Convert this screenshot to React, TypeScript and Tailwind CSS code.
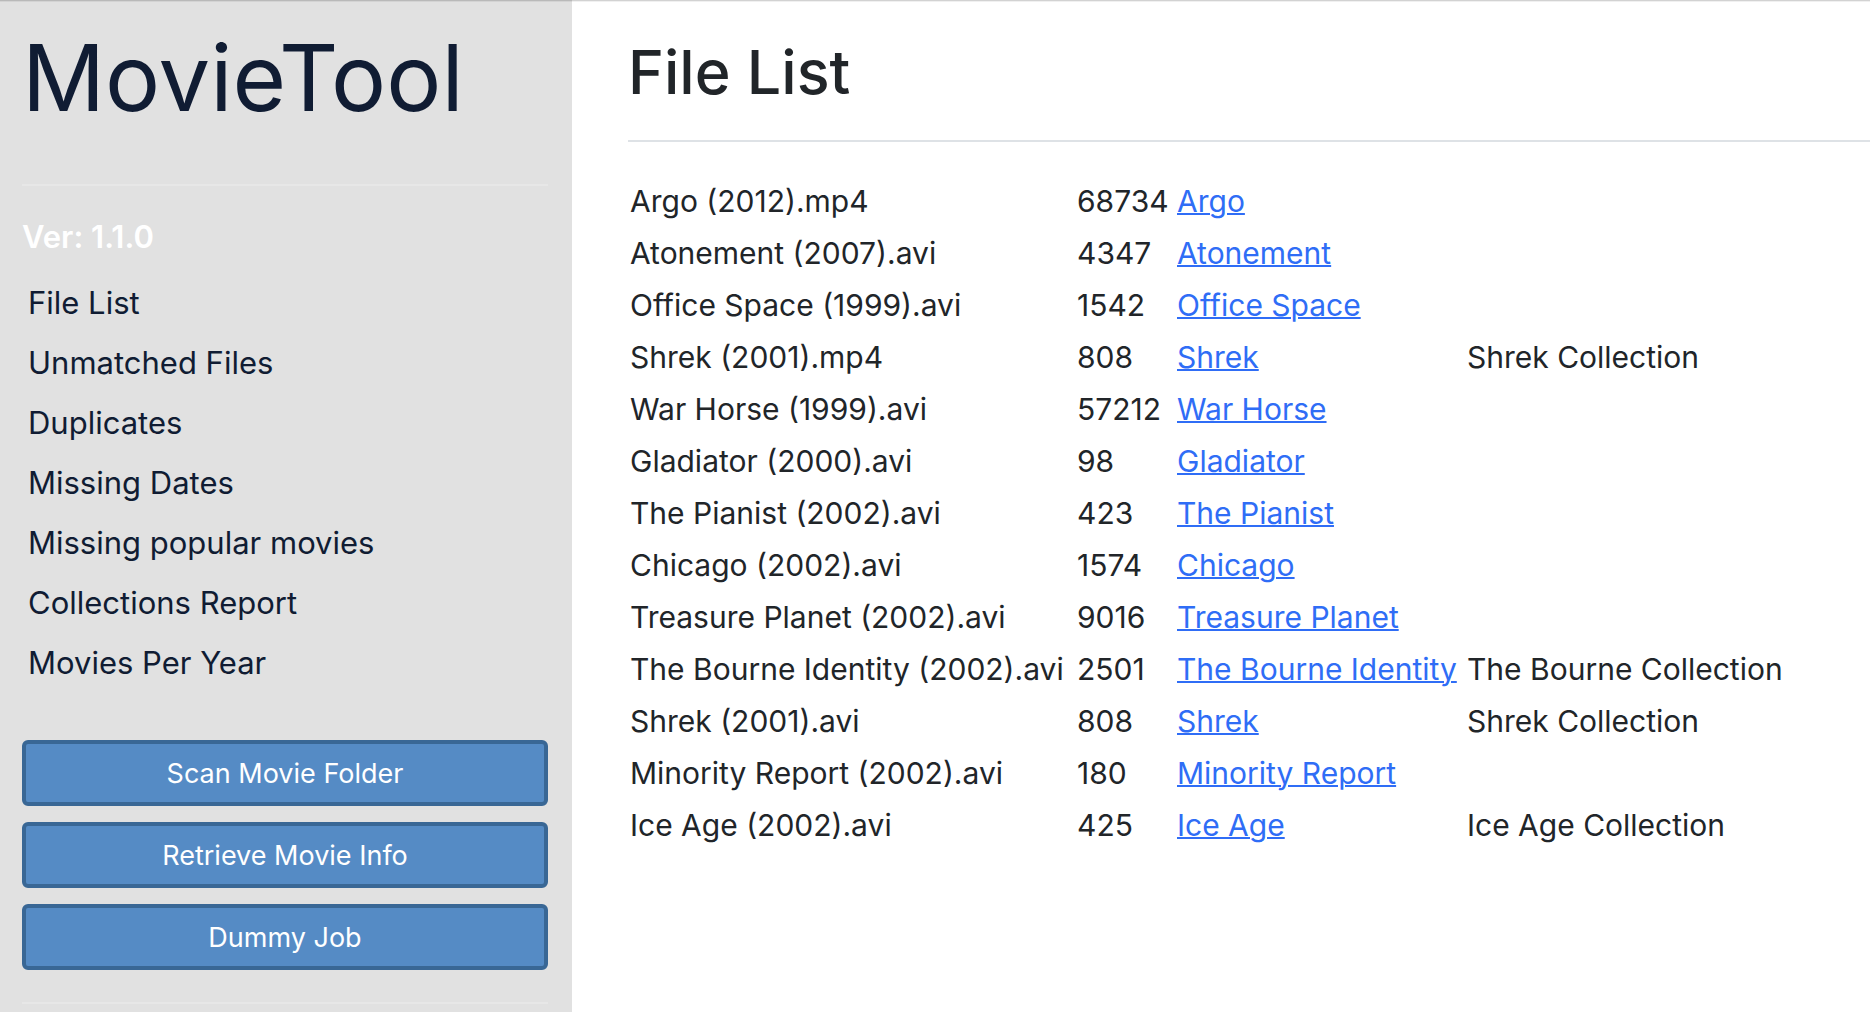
const navItems = [
  'File List',
  'Unmatched Files',
  'Duplicates',
  'Missing Dates',
  'Missing popular movies',
  'Collections Report',
  'Movies Per Year',
];

const jobs = ['Scan Movie Folder', 'Retrieve Movie Info', 'Dummy Job'];

type Movie = { file: string; id: number; title: string; collection?: string };

const movies: Movie[] = [
  { file: 'Argo (2012).mp4', id: 68734, title: 'Argo' },
  { file: 'Atonement (2007).avi', id: 4347, title: 'Atonement' },
  { file: 'Office Space (1999).avi', id: 1542, title: 'Office Space' },
  { file: 'Shrek (2001).mp4', id: 808, title: 'Shrek', collection: 'Shrek Collection' },
  { file: 'War Horse (1999).avi', id: 57212, title: 'War Horse' },
  { file: 'Gladiator (2000).avi', id: 98, title: 'Gladiator' },
  { file: 'The Pianist (2002).avi', id: 423, title: 'The Pianist' },
  { file: 'Chicago (2002).avi', id: 1574, title: 'Chicago' },
  { file: 'Treasure Planet (2002).avi', id: 9016, title: 'Treasure Planet' },
  { file: 'The Bourne Identity (2002).avi', id: 2501, title: 'The Bourne Identity', collection: 'The Bourne Collection' },
  { file: 'Shrek (2001).avi', id: 808, title: 'Shrek', collection: 'Shrek Collection' },
  { file: 'Minority Report (2002).avi', id: 180, title: 'Minority Report' },
  { file: 'Ice Age (2002).avi', id: 425, title: 'Ice Age', collection: 'Ice Age Collection' },
];

function Sidebar() {
  return (
    <aside className="w-[572px] shrink-0 bg-[#e1e1e1] pt-[18px] pr-6 pl-[22px] text-[31px] text-[#101c33]">
      <h1 className="text-[92px] leading-[120px]">MovieTool</h1>
      <hr className="mt-[46px] border-t-2 border-[#e7e7e7]" />
      <p className="mt-[27px] font-semibold leading-[48px] text-white">Ver: 1.1.0</p>
      <nav className="mt-3">
        <ul>
          {navItems.map((item) => (
            <li key={item}>
              <a href="#" className="block px-1.5 leading-[60px]">
                {item}
              </a>
            </li>
          ))}
        </ul>
      </nav>
      <div className="mt-[47px] flex flex-col gap-4">
        {jobs.map((job) => (
          <button
            key={job}
            type="button"
            className="h-[66px] w-full rounded-md border-4 border-[#396795] bg-[#558bc5] pt-0.5 text-[27px] text-white"
          >
            {job}
          </button>
        ))}
      </div>
      <hr className="mt-8 border-t-2 border-[#e7e7e7]" />
    </aside>
  );
}

function FileTable() {
  return (
    <table className="mt-[33px] text-[30px] leading-[48px] whitespace-nowrap">
      <colgroup>
        <col className="w-[447px]" />
        <col className="w-[100px]" />
        <col className="w-[290px]" />
        <col />
      </colgroup>
      <tbody>
        {movies.map((movie) => (
          <tr key={movie.file}>
            <td className="p-0.5">{movie.file}</td>
            <td className="p-0.5">{movie.id}</td>
            <td className="p-0.5">
              <a href="#" className="text-[#2f6df6] underline decoration-2">
                {movie.title}
              </a>
            </td>
            <td className="p-0.5">{movie.collection}</td>
          </tr>
        ))}
      </tbody>
    </table>
  );
}

export default function App() {
  return (
    <div className="relative flex h-screen overflow-hidden bg-white font-['Inter',sans-serif] text-[#212529]">
      <div className="absolute inset-x-0 top-0 h-0.5 border-t border-black/12 bg-black/6" />
      <Sidebar />
      <main className="min-w-0 flex-1 pt-[34px] pl-14">
        <h2 className="text-[61px] font-medium leading-[76px]">File List</h2>
        <hr className="mt-[30px] border-t-2 border-[#dee2e6]" />
        <FileTable />
      </main>
    </div>
  );
}
